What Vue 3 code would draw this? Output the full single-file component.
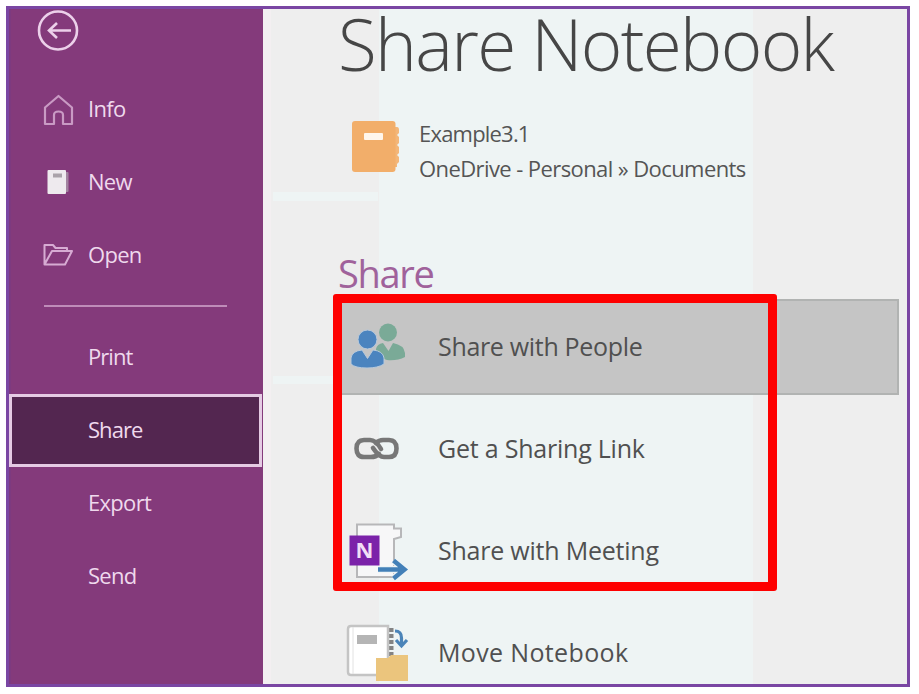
<script setup>
const primary = [
  { label: 'Info', icon: 'home', cls: 'info' },
  { label: 'New', icon: 'new', cls: 'new' },
  { label: 'Open', icon: 'open', cls: 'open' },
]
const secondary = [
  { label: 'Print', cls: 'print' },
  { label: 'Share', cls: 'share', active: true },
  { label: 'Export', cls: 'export' },
  { label: 'Send', cls: 'send' },
]
const options = [
  { label: 'Share with People', icon: 'people', selected: true },
  { label: 'Get a Sharing Link', icon: 'link' },
  { label: 'Share with Meeting', icon: 'meeting' },
  { label: 'Move Notebook', icon: 'move' },
]
</script>

<template>
  <div class="page">
    <div class="window">
      <nav class="sidebar">
        <div class="back">
          <svg width="44" height="44" viewBox="0 0 44 44" fill="none" stroke="#ecd0ea">
            <circle cx="22" cy="21.500" r="19" stroke-width="2.600" />
            <path d="M35 21.500H13M21 14L13 21.500L21 29" stroke-width="2.600" />
          </svg>
        </div>
        <div v-for="item in primary" :key="item.label" class="nav-item">
          <span class="nav-icon">
            <svg v-if="item.icon === 'home'" width="32" height="34" viewBox="0 0 32 34" fill="none" stroke="#c99ac4" stroke-width="2.200" stroke-linejoin="round">
              <path d="M3 14.500L16.500 3L30 14.500V31H21V22Q21 18.500 16.500 18.500Q12 18.500 12 22V31H3Z" />
            </svg>
            <svg v-else-if="item.icon === 'new'" width="32" height="28" viewBox="0 0 32 28">
              <rect x="22" y="3" width="4.500" height="20" rx="1" fill="#a283a0" />
              <rect x="5.500" y="1" width="18.500" height="24" rx="1" fill="#eeeaee" />
              <rect x="11" y="4.500" width="9" height="4" fill="#aaa3aa" />
            </svg>
            <svg v-else width="32" height="26" viewBox="0 0 32 26" fill="none" stroke="#d7abd3" stroke-width="2" stroke-linejoin="round">
              <path d="M2.500 21.500V2H11L13.500 5H25V8M2.500 21.500L10 8H30L23 21.500Z" />
            </svg>
          </span>
          <span :class="['nav-label', item.cls]">{{ item.label }}</span>
        </div>
        <div class="divider"></div>
        <div v-for="item in secondary" :key="item.label" :class="['nav-item', { active: item.active }]">
          <span class="nav-icon"></span>
          <span :class="['nav-label', item.cls]">{{ item.label }}</span>
        </div>
      </nav>

      <main class="content">
        <h1>Share Notebook</h1>
        <section class="notebook">
          <svg width="52" height="56" viewBox="0 0 52 56">
            <path d="M44 8H47Q49 8 49 11V14L47 16L49 18V24L47 26L49 28V34L47 36L49 38V43L47 45V48H44Z" fill="#f3b679" />
            <rect x="2" y="2" width="43.500" height="51" rx="3" fill="#f2ae6a" />
            <rect x="14" y="14" width="19" height="7" rx="1" fill="#fff6ec" />
          </svg>
          <div class="details">
            <div class="name">Example3.1</div>
            <div class="path">OneDrive - Personal » Documents</div>
          </div>
        </section>
        <h2>Share</h2>
        <ul class="options">
          <li v-for="(option, i) in options" :key="option.label" :class="{ selected: option.selected }">
            <svg v-if="option.icon === 'people'" class="opt-icon" width="64" height="64" viewBox="0 0 64 64">
              <g fill="#7aaa97">
                <circle cx="43" cy="17.500" r="9" />
                <path d="M31 41V34Q32 29 38 28L43.500 36L48 28Q59 30 60 38V42Q52 46 42 45Z" />
              </g>
              <g fill="#4b84bf" stroke="#b7c9dc" stroke-width="1">
                <circle cx="22.500" cy="24.500" r="9.500" />
                <path d="M6 49V43Q7 36 17 35L22.500 43.500L28 35Q38 36 39 43V49Q33 53 22 53Q10 53 6 49Z" />
              </g>
            </svg>
            <svg v-else-if="option.icon === 'link'" class="opt-icon" width="64" height="64" viewBox="0 0 64 64" fill="none" stroke="#777" stroke-width="4.600" stroke-linecap="round">
              <path d="M34 37Q31 40 26 40H19Q11.500 40 11.500 31.500Q11.500 23 19 23H25Q31 23 36 32" />
              <path d="M31 26Q34 23 38 23H44Q51.500 23 51.500 31.500Q51.500 40 44 40H39Q34 40 28 31" />
            </svg>
            <svg v-else-if="option.icon === 'meeting'" class="opt-icon" width="64" height="64" viewBox="0 0 64 64">
              <path d="M12 5.500H49V9.500H56V18L49 20V58H12Z" fill="#f7f7f8" stroke="#b7b7b9" stroke-width="2" />
              <rect x="4.500" y="16.500" width="30" height="30" fill="#7b22a9" />
              <text class="n-mark" x="19.500" y="39" text-anchor="middle">N</text>
              <path d="M33 50.500H59M48.500 41.500L59 50.500L48.500 59.500" fill="none" stroke="#eef4f6" stroke-width="7" />
              <path d="M33 50.500H59M48.500 41.500L59.500 50.500L48.500 59.500" fill="none" stroke="#4380b8" stroke-width="4.500" />
            </svg>
            <svg v-else class="opt-icon" width="64" height="64" viewBox="0 0 64 64">
              <path d="M46 7V36" stroke="#838383" stroke-width="5" stroke-dasharray="4 2" />
              <path d="M6 5H43V54H6Q3 54 3 51V8Q3 5 6 5Z" fill="#fff" stroke="#c4c4c4" stroke-width="2.500" />
              <path d="M8 6V53" stroke="#e2e2e2" stroke-width="1" />
              <rect x="12" y="14" width="20" height="9" fill="#b5b5b5" />
              <path d="M50 10Q56.500 10 56.500 17V24M51 19L56.500 25L62 19" fill="none" stroke="#4b84b8" stroke-width="3.200" />
              <path d="M31 37H43L46 34H63V60H31Z" fill="#ebc57d" />
            </svg>
            <span :class="['opt-label', 'o' + i]">{{ option.label }}</span>
          </li>
        </ul>
      </main>
    </div>
    <div class="highlight"></div>
  </div>
</template>

<style>
body {
  background: #fff;
  overflow: hidden;
}
</style>

<style scoped>
.page {
  position: relative;
  box-sizing: border-box;
  width: 919px;
  height: 694px;
  padding: 6px 9px 7px 6px;
  overflow: hidden;
  font-family: "Open Sans", "Noto Sans", sans-serif;
}
.window {
  box-sizing: border-box;
  display: flex;
  width: 904px;
  height: 681px;
  border: 3px solid #7a46a3;
  overflow: hidden;
}
.sidebar {
  flex: 0 0 254px;
  background: #843a7b;
  box-shadow: inset 2px 0 #7d3a80;
}
.back {
  box-sizing: border-box;
  height: 64px;
  padding-left: 27px;
}
.back svg {
  display: block;
}
.nav-item {
  box-sizing: border-box;
  display: flex;
  align-items: center;
  height: 73px;
  padding-left: 33px;
}
.nav-item.active {
  background: #532650;
  border: 3px solid #e5cbe4;
  padding-left: 30px;
  margin-right: 1px;
}
.nav-icon {
  display: flex;
  width: 46px;
}
.nav-label {
  padding-bottom: 3px;
  font-size: 22px;
  line-height: 30px;
  letter-spacing: -0.7px;
  color: #efd9ed;
  white-space: nowrap;
}
.nav-label.print,
.nav-label.share {
  letter-spacing: -0.95px;
}
.divider {
  height: 2px;
  margin: 13px 36px 14px 35px;
  background: #bf8cb9;
}
.content {
  flex: 1;
  min-width: 0;
  padding-left: 75px;
  background:
    linear-gradient(#eef4f4, #eef4f4) 10px 183px / 105px 9px no-repeat,
    linear-gradient(#eef4f4, #eef4f4) 10px 367px / 105px 8px no-repeat,
    linear-gradient(90deg, #f3eff1 8px, #eee 8px, #eee 116px, #eef4f4 116px, #eef4f4 490px, #eee 490px);
}
h1 {
  margin: 0;
  height: 110px;
  font-size: 71px;
  font-weight: 300;
  line-height: 70px;
  letter-spacing: -1.68px;
  color: #464646;
  white-space: nowrap;
}
.notebook {
  display: flex;
  height: 127px;
  padding-left: 12px;
}
.details {
  padding-left: 17px;
  font-size: 22px;
  line-height: 35px;
  color: #555;
  white-space: nowrap;
}
.name {
  margin-top: -3px;
  letter-spacing: -0.8px;
}
.path {
  letter-spacing: -0.59px;
}
h2 {
  margin: 0;
  height: 53px;
  font-size: 38px;
  font-weight: 400;
  line-height: 55px;
  letter-spacing: -1.3px;
  color: #a0629b;
}
.options {
  list-style: none;
  display: flex;
  flex-direction: column;
  gap: 6px;
  margin: 0;
  padding: 0 8px 0 1px;
}
li {
  box-sizing: border-box;
  display: flex;
  align-items: center;
  height: 96px;
  padding-left: 7px;
  border: 2px solid transparent;
}
li.selected {
  background: #c5c5c5;
  border-color: #b1b3b2;
}
.opt-icon {
  flex: none;
  margin-left: -3px;
}
.opt-label {
  margin-left: 29px;
  padding-bottom: 3px;
  font-size: 25px;
  color: #505050;
  white-space: nowrap;
}
.o0 {
  letter-spacing: -0.32px;
}
.o1,
.o2 {
  letter-spacing: -0.22px;
}
.o3 {
  letter-spacing: 0.35px;
}
.n-mark {
  font-size: 22px;
  font-weight: 700;
  fill: #f0def6;
}
.highlight {
  position: absolute;
  left: 333px;
  top: 294px;
  box-sizing: border-box;
  width: 444px;
  height: 297px;
  border: 9px solid #fe0000;
  border-radius: 3px;
}
</style>
